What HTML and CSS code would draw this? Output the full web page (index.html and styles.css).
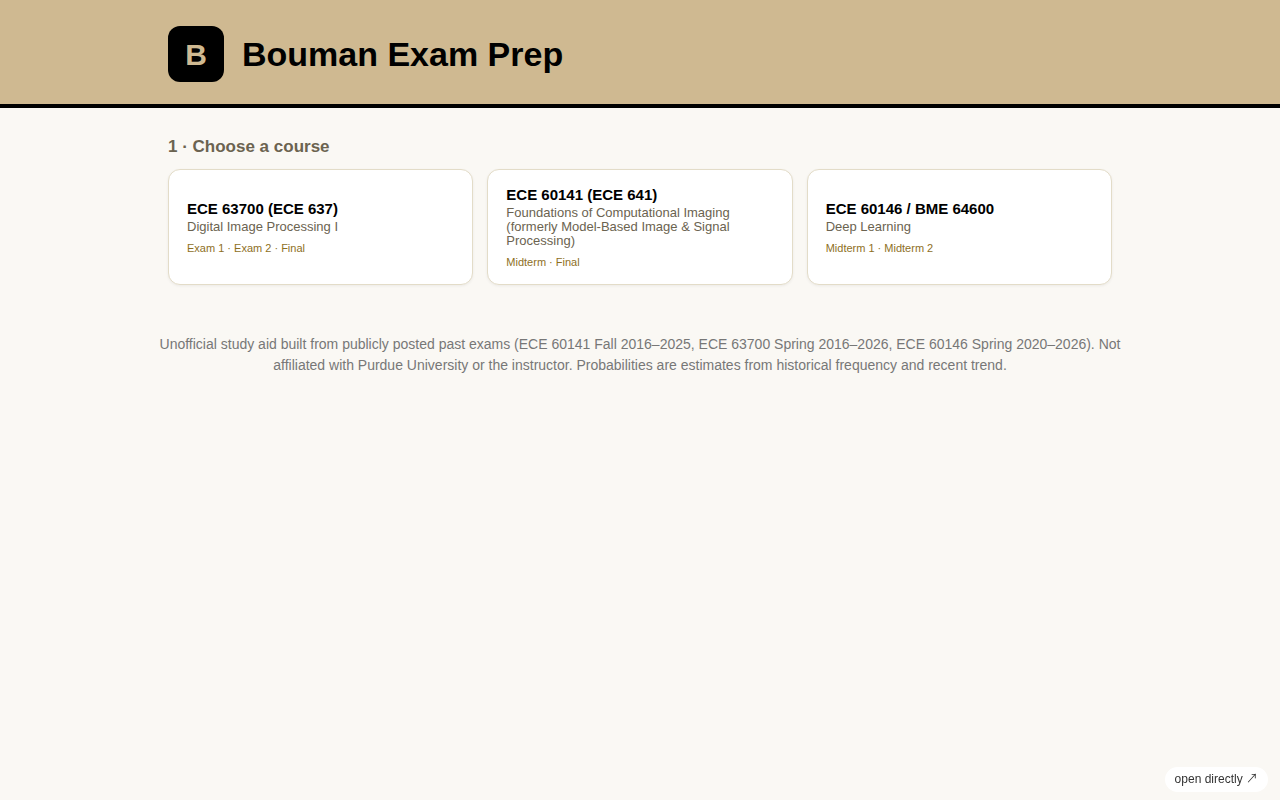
FILE: index.html
```
<!DOCTYPE html>
<html lang="en">
<head>
  <meta charset="UTF-8">
  <meta name="viewport" content="width=device-width, initial-scale=1.0">
  <title>Bouman Exam Prep</title>
  <link rel="stylesheet" href="styles.css">
</head>
<body>

  <!-- Header -->
  <header class="site-header">
    <div class="wrap brand">
      <div class="logo">B</div>
      <h1>Bouman Exam Prep</h1>
    </div>
  </header>

  <!-- Course picker -->
  <main class="wrap">
    <h2>1 · Choose a course</h2>
    <div class="courses">
      <button type="button" class="course">
        <span class="code">ECE 63700 (ECE 637)</span>
        <span class="name">Digital Image Processing I</span>
        <span class="exams">Exam 1 · Exam 2 · Final</span>
      </button>
      <button type="button" class="course">
        <span class="code">ECE 60141 (ECE 641)</span>
        <span class="name">Foundations of Computational Imaging (formerly Model-Based Image &amp; Signal Processing)</span>
        <span class="exams">Midterm · Final</span>
      </button>
      <button type="button" class="course">
        <span class="code">ECE 60146 / BME 64600</span>
        <span class="name">Deep Learning</span>
        <span class="exams">Midterm 1 · Midterm 2</span>
      </button>
    </div>
  </main>

  <footer class="site-footer">
    Unofficial study aid built from publicly posted past exams (ECE 60141 Fall 2016–2025, ECE 63700 Spring 2016–2026, ECE 60146 Spring 2020–2026). Not affiliated with Purdue University or the instructor. Probabilities are estimates from historical frequency and recent trend.
  </footer>

  <a class="open-link" href="#">open directly <span class="arrow">↗</span></a>

</body>
</html>
```
FILE: styles.css
```
* {
  box-sizing: border-box;
}

body {
  margin: 0;
  font-family: "Liberation Sans", Arial, sans-serif;
  background: #faf8f4;
  color: #000;
  line-height: 1.5;
}

.wrap {
  max-width: 980px;
  margin: 0 auto;
  padding: 0 18px;
}

/* Header */
.site-header {
  background: #cfb991;
  border-bottom: 4px solid #000;
  padding: 26px 0 22px;
}

.brand {
  display: flex;
  align-items: center;
  gap: 18px;
}

.logo {
  width: 56px;
  height: 56px;
  border-radius: 12px;
  background: #000;
  color: #cfb991;
  font-size: 30px;
  font-weight: bold;
  line-height: 58px;
  text-align: center;
}

h1 {
  margin: 0;
  font-size: 34px;
  line-height: 39px;
}

/* Courses */
h2 {
  margin: 26px 0 10px;
  font-size: 17px;
  line-height: 25px;
  color: #6b6350;
}

.courses {
  display: grid;
  grid-template-columns: repeat(auto-fit, minmax(260px, 1fr));
  gap: 14px;
}

.course {
  padding: 16px 18px 15px;
  border: 1px solid #e3dcc8;
  border-radius: 12px;
  background: #fff;
  box-shadow: 0 1px 3px rgba(0, 0, 0, 0.06);
  font-family: inherit;
  text-align: left;
  cursor: pointer;
}

.course span {
  display: block;
}

.course .code {
  font-size: 15px;
  font-weight: bold;
  line-height: 17px;
  color: #000;
}

.course .name {
  margin-top: 3px;
  font-size: 13px;
  line-height: 14px;
  color: #6b6350;
}

.course .exams {
  margin-top: 8px;
  font-size: 11px;
  line-height: 13px;
  color: #8e6f1e;
}

/* Footer */
.site-footer {
  max-width: 980px;
  margin: 49px auto 0;
  font-size: 14px;
  line-height: 21px;
  color: #777;
  text-align: center;
}

.open-link {
  position: fixed;
  right: 12px;
  bottom: 8px;
  padding: 5px 10px;
  border-radius: 999px;
  background: #fff;
  color: #333;
  font-size: 12px;
  line-height: 15px;
  text-decoration: none;
}

.arrow {
  font-family: "Noto Sans CJK JP", sans-serif;
  line-height: 1;
}
```
